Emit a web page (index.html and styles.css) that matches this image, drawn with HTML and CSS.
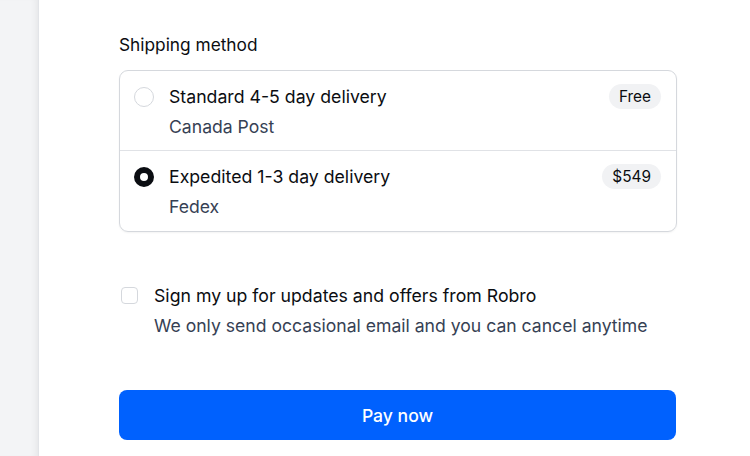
FILE: index.html
```html
<!DOCTYPE html>
<html lang="en">
<head>
<meta charset="utf-8">
<title>Checkout</title>
<link rel="stylesheet" href="styles.css">
</head>
<body>
<div class="page">
  <aside class="side"></aside>
  <main class="main">
    <div class="label">Shipping method</div>
    <div class="card">
      <label class="option">
        <span class="radio"></span>
        <span class="opt-text">
          <span class="opt-title">Standard 4-5 day delivery</span>
          <span class="opt-sub">Canada Post</span>
        </span>
        <span class="badge">Free</span>
      </label>
      <label class="option">
        <span class="radio checked"></span>
        <span class="opt-text">
          <span class="opt-title">Expedited 1-3 day delivery</span>
          <span class="opt-sub">Fedex</span>
        </span>
        <span class="badge">$549</span>
      </label>
    </div>
    <label class="consent">
      <span class="checkbox"></span>
      <span class="opt-text">
        <span class="opt-title">Sign my up for updates and offers from Robro</span>
        <span class="opt-sub">We only send occasional email and you can cancel anytime</span>
      </span>
    </label>
    <button class="pay" type="button">Pay now</button>
  </main>
</div>
</body>
</html>
```
FILE: styles.css
```css
* { box-sizing: border-box; }
html, body { margin: 0; padding: 0; background: #fff; }
body {
  font-family: Inter, "Noto Sans", sans-serif;
  color: #111827;
  width: 750px;
  height: 456px;
  overflow: hidden;
}
.page { display: flex; height: 456px; }
.side {
  width: 39px;
  flex: none;
  background: #f3f4f6;
  border-right: 1px solid #e2e4e8;
  box-shadow: inset -6px 0 6px -4px rgba(0,0,0,0.06);
}
.main {
  padding: 33px 0 0 80px;
  width: 638px;
}
.label {
  font-size: 17.3px;
  line-height: 24px;
  font-weight: 400;
  color: #0b0d11;
  margin-bottom: 13px;
}
.card {
  border: 1px solid #d5d8dd;
  border-radius: 9px;
  width: 558px;
  box-shadow: 0 1px 2px rgba(0,0,0,0.05);
}
.option {
  display: flex;
  align-items: flex-start;
  padding: 13px 15px 10px 14px;
}
.option + .option {
  border-top: 1px solid #e0e2e6;
  padding-bottom: 11px;
}
.radio {
  width: 20px;
  height: 20px;
  border-radius: 50%;
  border: 1px solid #d5d8dd;
  flex: none;
  margin-top: 3px;
  margin-right: 15px;
  background: #fff;
}
.radio.checked {
  border: 6px solid #0b0d12;
  background: #fff;
}
.opt-text { display: flex; flex-direction: column; flex: 1; }
.opt-title {
  font-size: 17.7px;
  line-height: 26px;
  color: #0b0d11;
}
.opt-sub {
  font-size: 17.6px;
  line-height: 26px;
  margin-top: 4px;
  color: #364154;
}
.badge {
  flex: none;
  background: #f1f2f4;
  border-radius: 999px;
  font-size: 15.4px;
  line-height: 25px;
  padding: 0 10px;
  color: #0b0d11;
}
.consent {
  display: flex;
  align-items: flex-start;
  margin-top: 51px;
  padding-left: 2px;
}
.checkbox {
  width: 17px;
  height: 17px;
  border: 1px solid #d5d8dd;
  border-radius: 4px;
  flex: none;
  margin-top: 4px;
  margin-right: 16px;
}
.pay {
  display: block;
  margin-top: 51px;
  width: 557px;
  height: 50px;
  border: 0;
  border-radius: 8px;
  background: #0061fe;
  color: #fff;
  font-family: Inter, "Noto Sans", sans-serif;
  font-size: 17.6px;
  font-weight: 500;
}
```
